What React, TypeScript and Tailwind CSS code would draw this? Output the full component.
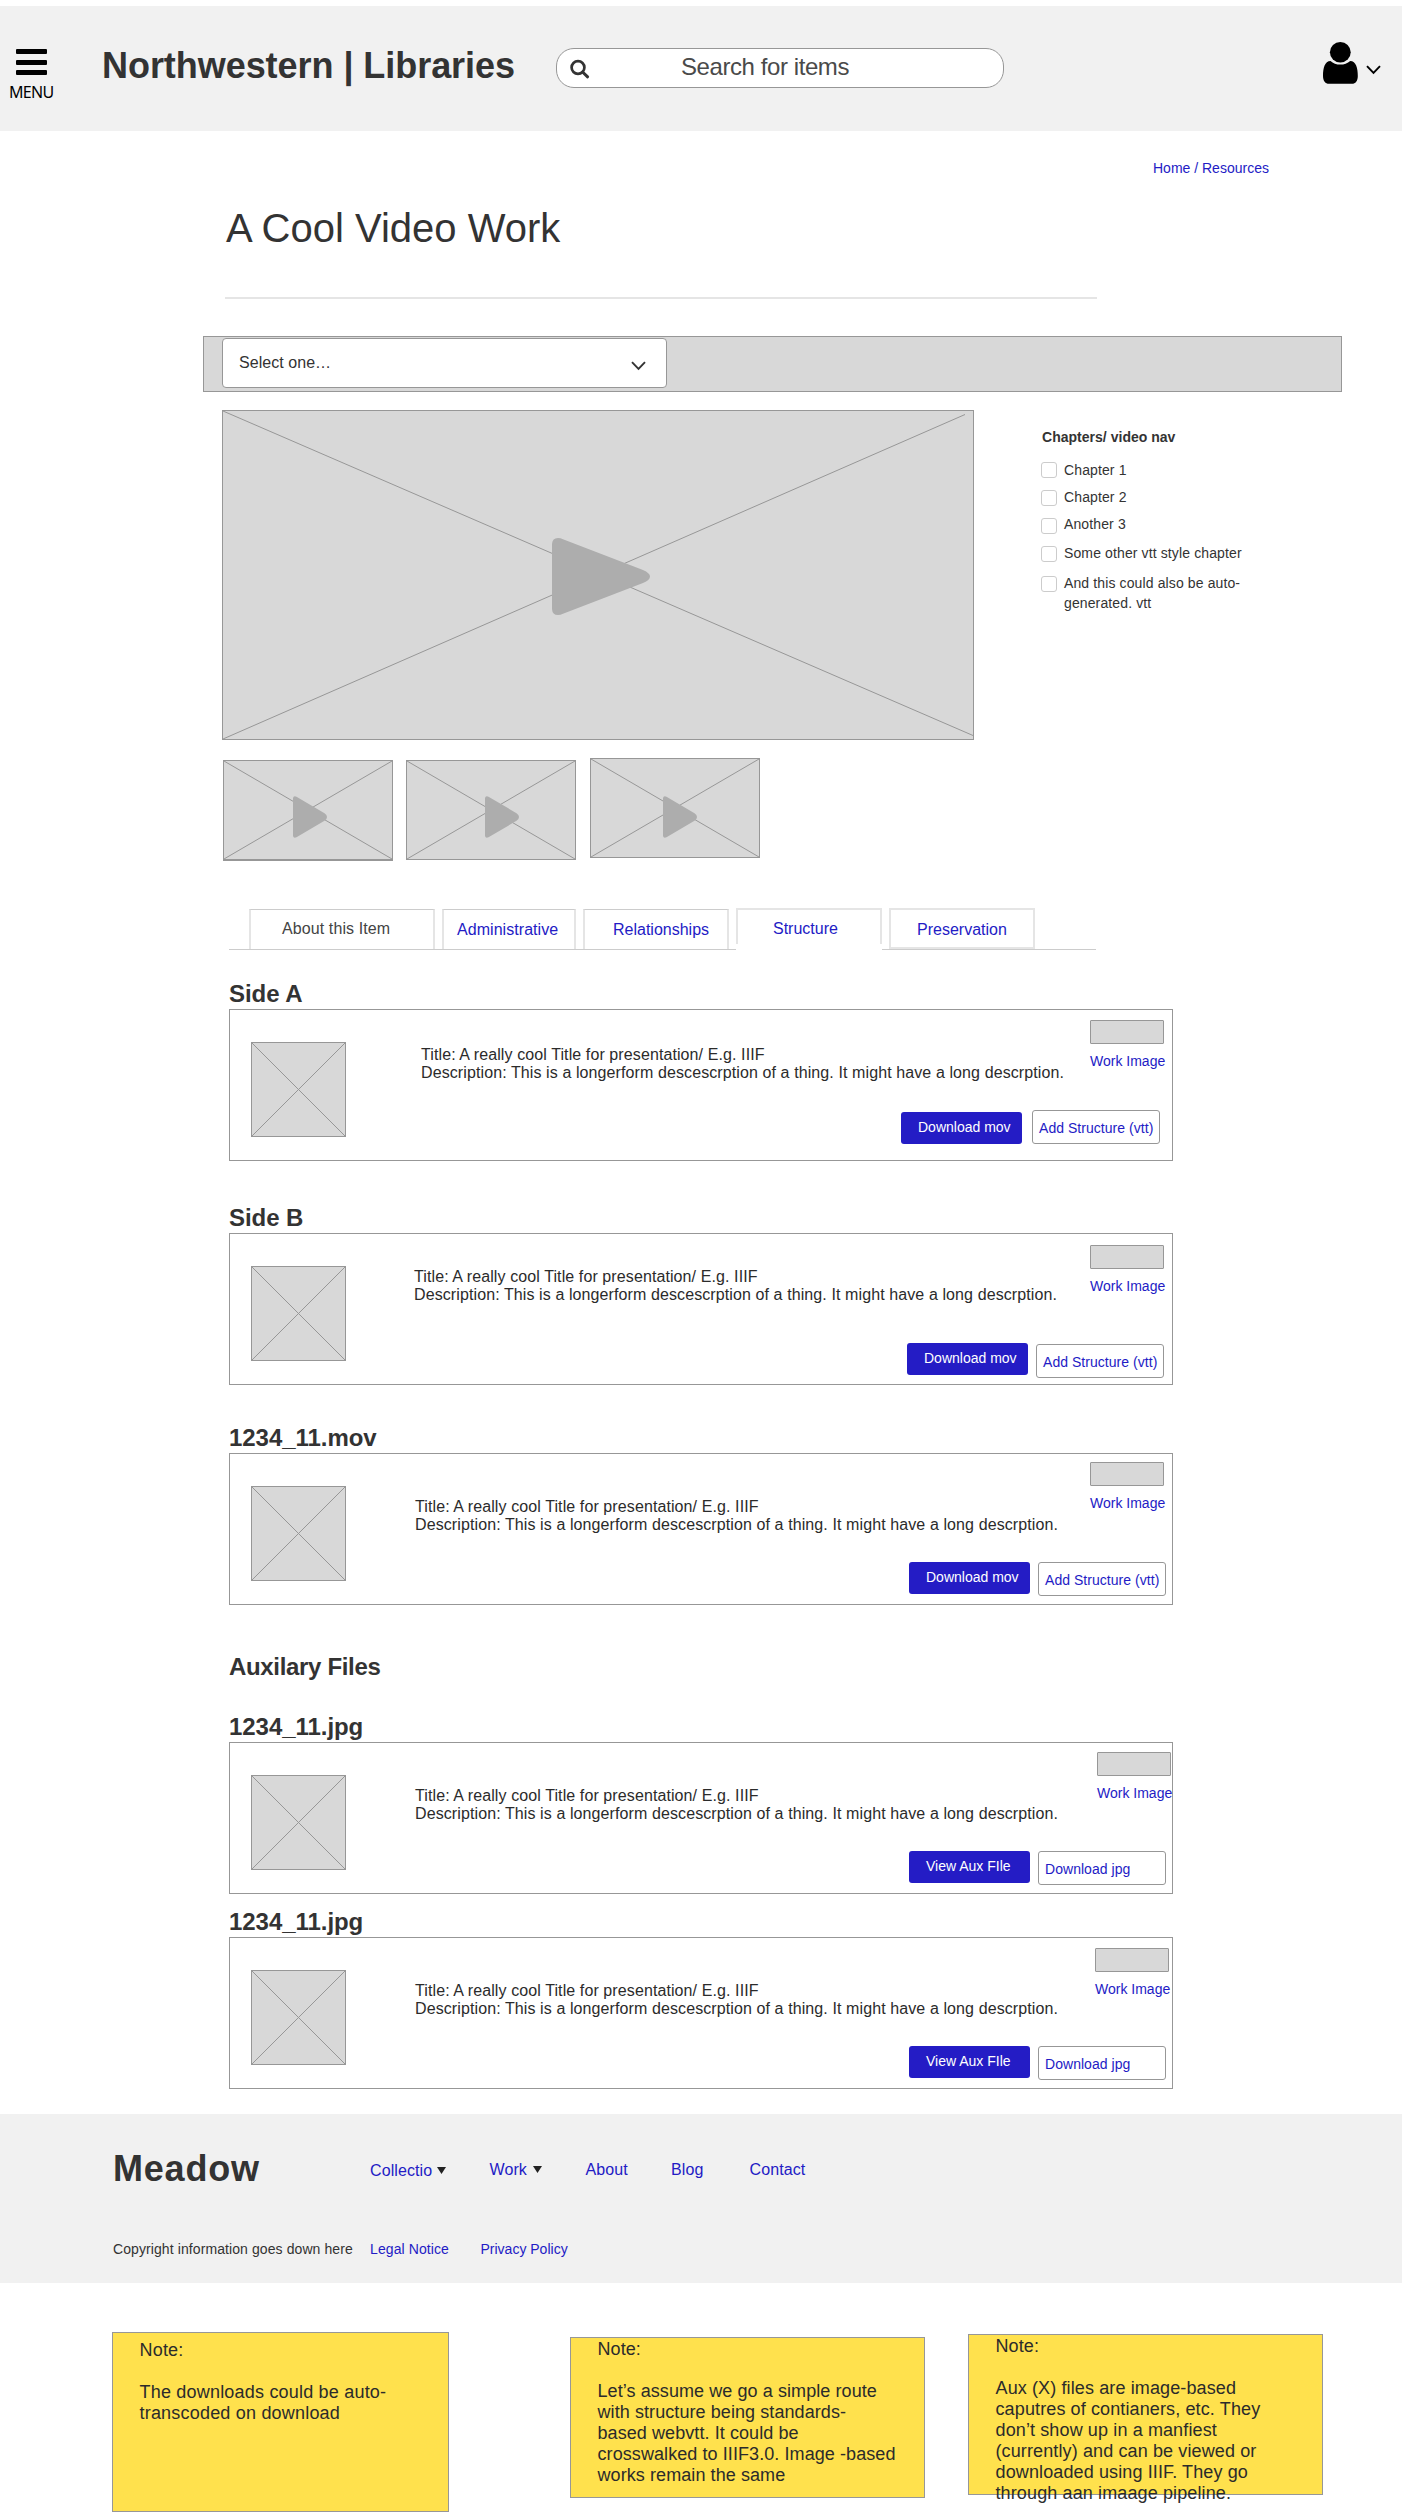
import React from "react";

function Chevron({ className }: { className: string }) {
  return (
    <svg className={className} width="15" height="10" viewBox="0 0 15 10" fill="none" stroke="currentColor" strokeWidth="1.9">
      <path d="M1 1.2 L7.5 8 L14 1.2" />
    </svg>
  );
}

function Header() {
  return (
    <header className="mt-[6px] flex h-[125px] items-start bg-[#f1f1f1]">
      <button className="ml-[9px] mt-[43px] w-[47px] text-black">
        <span className="ml-[7px] flex w-[31px] flex-col gap-[5.5px]">
          <span className="h-[5px] rounded-[1px] bg-black" />
          <span className="h-[5px] rounded-[1px] bg-black" />
          <span className="h-[5px] rounded-[1px] bg-black" />
        </span>
        <span className="mt-[7px] block text-left font-['Noto_Sans',sans-serif] text-[16px] leading-[20px] tracking-[-0.7px]">MENU</span>
      </button>
      <div className="ml-[46px] mt-[39px] w-[454px] whitespace-nowrap text-[36px] font-bold leading-[41px] tracking-[-0.05px]">Northwestern | Libraries</div>
      <div className="mt-[42px] flex h-[40px] w-[448px] rounded-[18px] border border-[#979797] bg-white">
        <svg className="ml-[13px] mt-[10px]" width="20" height="20" viewBox="0 0 20 20" fill="none" stroke="#333333">
          <circle cx="8" cy="8.5" r="6.4" strokeWidth="2.7" />
          <path d="M12.6 13 L17.6 17.8" strokeWidth="3" strokeLinecap="round" />
        </svg>
        <span className="ml-[91px] mt-[4px] whitespace-nowrap text-[24px] leading-[27px] tracking-[-0.42px] text-[#4a4a4a]">Search for items</span>
      </div>
      <svg className="ml-[319px] mt-[36px] text-black" width="35" height="42" viewBox="0 0 35 42" fill="currentColor">
        <ellipse cx="17.3" cy="10.3" rx="10.4" ry="10.3" />
        <path d="M7.5 19 C10 21.5 13.5 22.6 17.3 22.6 C21 22.6 24.6 21.5 27.2 19 C33 19 34.8 26 34.8 34 C34.8 39 32.5 41.8 29 41.8 L6 41.8 C2.4 41.8 0 39 0 34 C0 26 1.8 19 7.5 19 Z" />
      </svg>
      <Chevron className="ml-[8px] mt-[59px] text-black" />
    </header>
  );
}

function CrossBox({ w, h, className, lines }: { w: number; h: number; className: string; lines?: string }) {
  return (
    <svg className={className} width={w} height={h} viewBox={`0 0 ${w} ${h}`} fill="none" stroke="#979797">
      <rect x="0.5" y="0.5" width={w - 1} height={h - 1} fill="#d8d8d8" />
      <path d={lines ?? `M1 1 L${w - 1} ${h - 1} M1 ${h - 1} L${w - 1} 1`} />
    </svg>
  );
}

function SmallPlay({ className }: { className: string }) {
  return (
    <svg className={className} width="34" height="42" viewBox="0 0 34 42" fill="#adadad">
      <path d="M0 2 Q0.5 -0.5 3.5 0.7 L31.5 17.2 Q34 18.6 34 21 Q34 23.4 31.5 24.8 L3.5 41.3 Q0.5 42.5 0 40 Z" />
    </svg>
  );
}

const chapters = [
  { label: "Chapter 1", row: "mt-[17px]", text: "" },
  { label: "Chapter 2", row: "mt-[12px]", text: "-mt-px" },
  { label: "Another 3", row: "mt-[12px]", text: "-mt-[2px]" },
  { label: "Some other vtt style chapter", row: "mt-[12px]", text: "-mt-px" },
];

function Player() {
  return (
    <>
      <section className="mt-[18px] flex items-start">
        <div className="relative ml-[222px] h-[330px] w-[752px]">
          <CrossBox w={752} h={330} className="block" lines="M1 1 L751 325.5 M1 329 L743 4.5" />
          <svg className="absolute left-[330px] top-[127.5px]" width="98" height="77" viewBox="0 0 98 77" fill="#adadad">
            <path d="M0 6 Q0.3 0 6 0 Q8.5 0 11 1.2 L91 32 Q98 35 98 38.5 Q98 42 91 45 L11 75.8 Q8.5 77 6 77 Q0.3 77 0 71 Z" />
          </svg>
        </div>
        <div className="ml-[67px] mt-[19px] text-[14px] leading-[16px] tracking-[0.12px]">
          <h2 className="ml-px whitespace-nowrap font-bold tracking-[0.02px]">Chapters/ video nav</h2>
          {chapters.map((c) => (
            <label key={c.label} className={`flex h-4 items-start ${c.row}`}>
              <span className="h-4 w-4 rounded-[3px] border border-[#cccccc] bg-white" />
              <span className={`ml-[7px] whitespace-nowrap ${c.text}`}>{c.label}</span>
            </label>
          ))}
          <label className="mt-[14px] flex h-4 items-start">
            <span className="h-4 w-4 rounded-[3px] border border-[#cccccc] bg-white" />
            <span className="-mt-[3px] ml-[7px] whitespace-nowrap leading-[20px]">
              And this could also be auto-
              <br />
              generated. vtt
            </span>
          </label>
        </div>
      </section>
      <section className="ml-[223px] mt-[18px] flex h-[103px] items-start">
        <div className="relative mt-[2px] border-b border-[#979797]">
          <CrossBox w={170} h={100} className="block" />
          <SmallPlay className="absolute left-[70px] top-[36px]" />
        </div>
        <div className="relative ml-[13px] mt-[2px]">
          <CrossBox w={170} h={100} className="block" />
          <SmallPlay className="absolute left-[79px] top-[36px]" />
        </div>
        <div className="relative ml-[14px]">
          <CrossBox w={170} h={100} className="block" />
          <SmallPlay className="absolute left-[73px] top-[38px]" />
        </div>
      </section>
    </>
  );
}

function Tabs() {
  return (
    <nav className="ml-[229px] mt-[47px] flex h-[42px] w-[867px] items-end gap-[7px] whitespace-nowrap border-b border-[#cccccc] pl-[20px] text-[16px] leading-[17px] text-[#231bc5]">
      <div className="h-[40px] w-[186px] border-x-2 border-t border-x-[#e5e5e5] border-t-[#cccccc] pl-[31px] pt-[10px] tracking-[0.1px] text-[#444444]">About this Item</div>
      <div className="h-[40px] w-[134px] border-x-2 border-t border-x-[#e5e5e5] border-t-[#cccccc] pl-[13px] pt-[11px] tracking-[0.05px]">Administrative</div>
      <div className="h-[40px] w-[146px] border-x-2 border-t border-x-[#e5e5e5] border-t-[#cccccc] pl-[28px] pt-[11px]">Relationships</div>
      <div className="-mb-px h-[42px] w-[146px] bg-white">
        <div className="h-[36px] border-x-2 border-t-2 border-[#e5e5e5] pl-[35px] pt-[10px]">Structure</div>
      </div>
      <div className="h-[41px] w-[146px] border-2 border-[#e5e5e5] pl-[26px] pt-[11px]">Preservation</div>
    </nav>
  );
}

interface FileCard {
  heading: string;
  primary: string;
  secondary: string;
  section: string;
  text: string;
  badge: string;
  blue: string;
  outline: string;
}

const cards: FileCard[] = [
  { heading: "Side A", primary: "Download mov", secondary: "Add Structure (vtt)", section: "mt-[30px]", text: "ml-[75px] mt-[36px]", badge: "mt-[10px] mr-[8px]", blue: "mt-[4px]", outline: "mt-[2px] ml-[10px] mr-[12px]" },
  { heading: "Side B", primary: "Download mov", secondary: "Add Structure (vtt)", section: "mt-[43px]", text: "ml-[68px] mt-[34px]", badge: "mt-[11px] mr-[8px]", blue: "mt-[11px]", outline: "mt-[12px] ml-[8px] mr-[8px]" },
  { heading: "1234_11.mov", primary: "Download mov", secondary: "Add Structure (vtt)", section: "mt-[39px]", text: "ml-[69px] mt-[44px]", badge: "mt-[8px] mr-[8px]", blue: "mt-[10px]", outline: "mt-[10px] ml-[8px] mr-[6px]" },
];

const auxCards: FileCard[] = [
  { heading: "1234_11.jpg", primary: "View Aux FIle", secondary: "Download jpg", section: "mt-[33px]", text: "ml-[69px] mt-[44px]", badge: "mt-[9px] mr-px", blue: "mt-[10px]", outline: "mt-[10px] ml-[8px] mr-[6px]" },
  { heading: "1234_11.jpg", primary: "View Aux FIle", secondary: "Download jpg", section: "mt-[14px]", text: "ml-[69px] mt-[44px]", badge: "mt-[10px] mr-[3px]", blue: "mt-[10px]", outline: "mt-[10px] ml-[8px] mr-[6px]" },
];

function Card({ c }: { c: FileCard }) {
  return (
    <section className={`ml-[229px] w-[944px] ${c.section}`}>
      <h3 className="text-[24px] font-bold leading-[27px] tracking-[-0.05px]">{c.heading}</h3>
      <div className="mt-[2px] flex h-[152px] items-start border border-[#979797]">
        <CrossBox w={95} h={95} className="ml-[21px] mt-[32px] shrink-0" />
        <div className="flex flex-1 flex-col">
          <div className="flex h-[98px] items-start">
            <p className={`flex-1 whitespace-nowrap text-[16px] leading-[18px] tracking-[0.1px] text-[#2b2b2b] ${c.text}`}>
              Title: A really cool Title for presentation/ E.g. IIIF
              <br />
              Description: This is a longerform descescrption of a thing. It might have a long descrption.
            </p>
            <div className={`w-[74px] ${c.badge}`}>
              <div className="h-[24px] rounded-[1px] border border-[#979797] bg-[#d8d8d8]" />
              <a className="mt-[9px] block whitespace-nowrap text-[14px] leading-[16px] text-[#231bc5]">Work Image</a>
            </div>
          </div>
          <div className="flex items-start justify-end whitespace-nowrap text-[14px] leading-[16px]">
            <button className={`h-[32px] w-[121px] rounded-[3px] bg-[#241cc5] pb-[2px] pl-[17px] text-left text-white ${c.blue}`}>{c.primary}</button>
            <button className={`h-[34px] w-[128px] rounded-[3px] border border-[#979797] bg-white pl-[6px] pt-[2px] text-left tracking-[0.04px] text-[#231bc5] ${c.outline}`}>{c.secondary}</button>
          </div>
        </div>
      </div>
    </section>
  );
}

function Caret({ className }: { className: string }) {
  return (
    <svg className={className} width="9" height="7" viewBox="0 0 9 7" fill="#222222">
      <path d="M0 0 H9 L4.5 7 Z" />
    </svg>
  );
}

function Footer() {
  return (
    <footer className="mt-[25px] h-[169px] bg-[#f1f1f1] pl-[113px] pt-[34px]">
      <div className="flex items-start text-[16px] leading-[17px] tracking-[0.1px] text-[#231bc5]">
        <div className="w-[257px] text-[36px] font-bold leading-[41px] tracking-[0.8px] text-[#333333]">Meadow</div>
        <a className="mt-[14px] flex w-[119.5px] items-start">
          Collectio
          <Caret className="ml-[5px] mt-[5px]" />
        </a>
        <a className="mt-[13px] flex w-[96px] items-start">
          Work
          <Caret className="ml-[6px] mt-[5px]" />
        </a>
        <a className="mt-[13px] w-[85.5px]">About</a>
        <a className="mt-[13px] w-[78.5px]">Blog</a>
        <a className="mt-[13px]">Contact</a>
      </div>
      <div className="mt-[52px] flex whitespace-nowrap text-[14px] leading-[16px] tracking-[0.09px] text-[#231bc5]">
        <span className="w-[257px] text-[#333333]">Copyright information goes down here</span>
        <a className="w-[110.5px]">Legal Notice</a>
        <a className="tracking-normal">Privacy Policy</a>
      </div>
    </footer>
  );
}

function Note({ className, children }: { className: string; children: React.ReactNode }) {
  return (
    <div className={`whitespace-nowrap border border-[#979797] bg-[#ffe14d] pl-[26.5px] text-[18px] leading-[21px] text-[#2b2b2b] ${className}`}>
      <p>Note:</p>
      <p className="mt-[21px]">{children}</p>
    </div>
  );
}

export default function App() {
  return (
    <div className="flex h-[2519px] w-[1402px] flex-col overflow-hidden bg-white font-['Liberation_Sans',Arial,sans-serif] text-[#333333]">
      <Header />
      <div className="mt-[29px] self-start pl-[1153px] text-[14px] leading-[16px] text-[#231bc5]">Home / Resources</div>
      <h1 className="ml-[226px] mt-[30px] text-[40px] leading-[44px]">A Cool Video Work</h1>
      <div className="ml-[225px] mt-[47px] h-[2px] w-[872px] shrink-0 bg-[#e5e5e5]" />
      <div className="ml-[203px] mt-[37px] h-[56px] w-[1139px] shrink-0 border border-[#979797] bg-[#d8d8d8]">
        <div className="ml-[18px] mt-px flex h-[50px] w-[445px] items-start justify-between rounded-[4px] border border-[#979797] bg-white pl-[16px] pr-[20px] text-[16px] leading-[17px]">
          <span className="mt-[15px] tracking-[0.05px]">Select one…</span>
          <Chevron className="mt-[22px]" />
        </div>
      </div>
      <Player />
      <Tabs />
      {cards.map((c) => (
        <Card key={c.heading} c={c} />
      ))}
      <h2 className="ml-[229px] mt-[48px] text-[24px] font-bold leading-[27px] tracking-[-0.33px]">Auxilary Files</h2>
      {auxCards.map((c) => (
        <Card key={c.section} c={c} />
      ))}
      <Footer />
      <section className="ml-[112px] flex items-start">
        <Note className="mt-[49px] h-[180px] w-[337px] pt-[7px] tracking-[0.2px]">
          The downloads could be auto-
          <br />
          transcoded on download
        </Note>
        <Note className="ml-[121px] mt-[54px] h-[161px] w-[355px] pt-px tracking-[0.08px]">
          Let’s assume we go a simple route
          <br />
          with structure being standards-
          <br />
          based webvtt. It could be
          <br />
          crosswalked to IIIF3.0. Image -based
          <br />
          works remain the same
        </Note>
        <Note className="ml-[43px] mt-[51px] h-[161px] w-[355px] pt-px tracking-[0.12px]">
          Aux (X) files are image-based
          <br />
          caputres of contianers, etc. They
          <br />
          don’t show up in a manfiest
          <br />
          (currently) and can be viewed or
          <br />
          downloaded using IIIF. They go
          <br />
          through aan imaage pipeline.
        </Note>
      </section>
    </div>
  );
}
